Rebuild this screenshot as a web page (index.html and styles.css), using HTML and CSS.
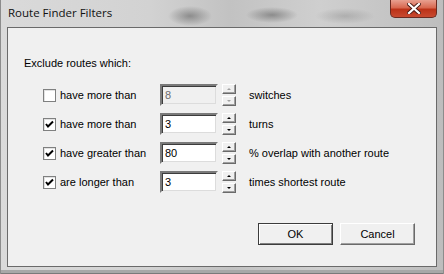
FILE: index.html
```html
<!DOCTYPE html>
<html lang="en">
<head>
    <meta charset="UTF-8">
    <title>Route Finder Filters</title>
    <link rel="stylesheet" href="styles.css">
</head>
<body>
    <div class="window">
        <div class="titlebar">
            <span class="title">Route Finder Filters</span>
            <div class="close">
                <svg width="14" height="11" viewBox="0 0 14 11">
                    <path d="M2 1 L12 10 M12 1 L2 10" stroke="#4a1a14" stroke-width="4" stroke-linecap="square"/>
                    <path d="M2 1 L12 10 M12 1 L2 10" stroke="#fff" stroke-width="2.2" stroke-linecap="square"/>
                </svg>
            </div>
        </div>

        <div class="client">
            <p class="intro">Exclude routes which:</p>

            <div class="rules">
                <div class="rule">
                    <label class="check"><span class="box"></span>have more than</label>
                    <span class="field disabled">8</span>
                    <div class="spin disabled"><span class="up"></span><span class="down"></span></div>
                    <span class="unit">switches</span>
                </div>
                <div class="rule">
                    <label class="check"><span class="box checked"></span>have more than</label>
                    <span class="field">3</span>
                    <div class="spin"><span class="up"></span><span class="down"></span></div>
                    <span class="unit">turns</span>
                </div>
                <div class="rule">
                    <label class="check"><span class="box checked"></span>have greater than</label>
                    <span class="field">80</span>
                    <div class="spin"><span class="up"></span><span class="down"></span></div>
                    <span class="unit">% overlap with another route</span>
                </div>
                <div class="rule">
                    <label class="check"><span class="box checked"></span>are longer than</label>
                    <span class="field">3</span>
                    <div class="spin"><span class="up"></span><span class="down"></span></div>
                    <span class="unit">times shortest route</span>
                </div>
            </div>

            <div class="actions">
                <button class="btn default">OK</button>
                <button class="btn">Cancel</button>
            </div>
        </div>
    </div>
</body>
</html>
```

FILE: styles.css
```css
body {
    margin: 0;
    font-family: 'Liberation Sans', Arial, sans-serif;
    font-size: 11px;
    color: #000;
    background: #9a9a9a;
}

.window {
    width: 444px;
    height: 274px;
    box-sizing: border-box;
    display: flex;
    flex-direction: column;
    padding: 0 7px 7px;
    background:
        radial-gradient(ellipse 22px 10px at 190px 16px, rgba(90, 90, 90, 0.55), transparent),
        radial-gradient(ellipse 26px 8px at 272px 15px, rgba(80, 80, 80, 0.5), transparent),
        radial-gradient(ellipse 30px 8px at 345px 16px, rgba(120, 120, 120, 0.35), transparent),
        linear-gradient(to right, #dadada 0, #d2d2d2 150px, #c2c2c2 230px, #cfcfcf 320px, #bdbdbd 444px);
    box-shadow: inset 1px 0 0 #8c8c8c, inset -1px 0 0 #8c8c8c, inset 0 -1px 0 #7a7a7a, inset 0 -4px 0 #a8a8a8;
}

.titlebar {
    height: 27px;
    display: flex;
    justify-content: space-between;
    align-items: flex-start;
}

.title {
    font-family: 'Open Sans', sans-serif;
    font-size: 11.5px;
    margin: 5px 0 0 1px;
    color: #111;
}

.close {
    width: 47px;
    height: 18px;
    box-sizing: border-box;
    border: 1px solid #6b2a20;
    border-top: none;
    border-radius: 0 0 5px 5px;
    background: linear-gradient(#e8a090 0, #d86850 45%, #bc3218 55%, #c84a30 100%);
    display: flex;
    align-items: center;
    justify-content: center;
}

.client {
    flex: 1;
    display: flex;
    flex-direction: column;
    border: 1px solid #6a6a6a;
    background: #f0f0f0;
    padding: 29px 21px 21px 16px;
}

.intro {
    margin: 0;
    line-height: 13px;
}

.rules {
    margin: 14px 0 0 19px;
    display: flex;
    flex-direction: column;
    gap: 7px;
}

.rule {
    display: flex;
    align-items: center;
    height: 22px;
}

.check {
    width: 117px;
    display: flex;
    align-items: center;
    gap: 4px;
}

.box {
    width: 13px;
    height: 13px;
    box-sizing: border-box;
    border: 1px solid #7f8080;
    background: #fff;
    box-shadow: inset 1px 1px 0 #e2e2e2;
}

.box.checked {
    background: #fff url("data:image/svg+xml,%3Csvg xmlns='http://www.w3.org/2000/svg' width='11' height='11'%3E%3Cpath d='M2 5 L4 7.5 L9 2.5' fill='none' stroke='black' stroke-width='2'/%3E%3C/svg%3E") center no-repeat;
}

.field {
    width: 58px;
    height: 22px;
    box-sizing: border-box;
    padding: 1px 3px 0;
    line-height: 16px;
    background: #fff;
    border-style: solid;
    border-width: 2px;
    border-color: #7a7a7a #f0f0f0 #f0f0f0 #7a7a7a;
    box-shadow: inset 1px 1px 0 #3c3c3c, inset -1px -1px 0 #dcdcdc;
}

.field.disabled {
    background: #f0f0f0;
    color: #6d6d6d;
}

.spin {
    margin-left: 4px;
    width: 14px;
    display: flex;
    flex-direction: column;
    gap: 2px;
}

.spin span {
    height: 10px;
    box-sizing: border-box;
    border: 1px solid;
    border-color: #fff #6a6a6a #6a6a6a #fff;
    background: #f0f0f0;
    box-shadow: inset -1px -1px 0 #a0a0a0;
    display: flex;
    align-items: center;
    justify-content: center;
}

.spin span::after {
    content: '';
    border-left: 2px solid transparent;
    border-right: 2px solid transparent;
}

.spin .up::after {
    border-bottom: 2px solid #000;
}

.spin .down::after {
    border-top: 2px solid #000;
}

.spin.disabled .up::after {
    border-bottom-color: #a0a0a0;
}

.spin.disabled .down::after {
    border-top-color: #a0a0a0;
}

.unit {
    margin-left: 13px;
}

.actions {
    margin-top: auto;
    display: flex;
    justify-content: flex-end;
    gap: 7px;
}

.btn {
    width: 75px;
    height: 22px;
    padding: 0;
    font-family: 'Liberation Sans', Arial, sans-serif;
    font-size: 11px;
    color: #000;
    background: #f0f0f0;
    border: 1px solid;
    border-color: #fff #6a6a6a #6a6a6a #fff;
    box-shadow: inset -1px -1px 0 #a0a0a0;
}

.btn.default {
    border-color: #3c3c3c;
    box-shadow: inset 1px 1px 0 #fff, inset -1px -1px 0 #808080;
}
```
